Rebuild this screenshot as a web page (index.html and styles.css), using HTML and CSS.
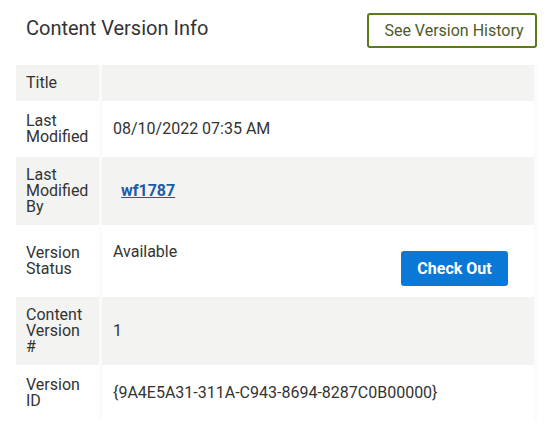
FILE: index.html
```html
<!DOCTYPE html>
<html>
<head>
<meta charset="utf-8">
<link rel="stylesheet" href="styles.css">
</head>
<body>
<div class="panel">
  <div class="header">
    <h2 class="title">Content Version Info</h2>
    <button class="btn-outline">See Version History</button>
  </div>
  <div class="grid">
    <div class="cell label shade r-title">Title</div>
    <div class="cell value shade r-title"></div>

    <div class="cell label r-mod">Last<br>Modified</div>
    <div class="cell value r-mod">08/10/2022 07:35 AM</div>

    <div class="cell label shade r-by">Last<br>Modified<br>By</div>
    <div class="cell value shade r-by"><a class="user" href="#">wf1787</a></div>

    <div class="cell label r-status">Version<br>Status</div>
    <div class="cell value r-status status-cell">
      <div class="status-wrap">
        <span class="status-text">Available</span>
        <button class="btn-primary">Check Out</button>
      </div>
    </div>

    <div class="cell label shade r-num">Content<br>Version<br>#</div>
    <div class="cell value shade r-num">1</div>

    <div class="cell label r-id">Version<br>ID</div>
    <div class="cell value r-id">{9A4E5A31-311A-C943-8694-8287C0B00000}</div>
  </div>
</div>
</body>
</html>
```

FILE: styles.css
```css
* { box-sizing: border-box; }
html, body {
  margin: 0;
  padding: 0;
  background: #ffffff;
}
body {
  font-family: Roboto, "Liberation Sans", Arial, sans-serif;
  color: #333333;
  font-size: 16px;
}
.panel {
  width: 548px;
  padding: 13px 11px 0 16px;
}
.header {
  display: flex;
  justify-content: space-between;
  align-items: flex-start;
  height: 52px;
}
.title {
  margin: 0;
  padding: 3px 0 0 10px;
  font-size: 20px;
  font-weight: 400;
  line-height: 24px;
  color: #333333;
}
.btn-outline {
  height: 35px;
  width: 170px;
  padding: 0 0 0 4px;
  background: #ffffff;
  border: 2px solid #5b7a1d;
  border-radius: 3px;
  font-family: Roboto, "Liberation Sans", Arial, sans-serif;
  font-size: 16px;
  color: #4e5a2a;
  cursor: pointer;
}
.grid {
  display: grid;
  grid-template-columns: 83px 432px;
  column-gap: 3px;
  width: 521px;
  padding-right: 3px;
  background: #fbfbfb;
}
.cell {
  display: flex;
  align-items: center;
  background: #ffffff;
  line-height: 16px;
}
.cell.shade { background: #f3f3f2; }
.label { padding: 0 4px 0 10px; }
.value { padding: 0 10px 0 11px; }
.r-title { height: 36px; }
.r-mod { height: 56px; }
.r-by { height: 68px; }
.r-status { height: 72px; }
.r-num { height: 68px; }
.r-id { height: 56px; }
.user {
  margin-left: 8px;
  font-weight: 700;
  color: #1c5ca7;
  text-decoration: underline;
}
.status-cell {
  align-items: flex-start;
  padding-top: 18px;
}
.status-wrap {
  display: flex;
  justify-content: space-between;
  align-items: flex-start;
  width: 100%;
}
.status-text {
  line-height: 18px;
}
.btn-primary {
  margin-top: 8px;
  margin-right: 16px;
  width: 107px;
  height: 35px;
  padding: 0;
  background: #0a78d6;
  border: none;
  border-radius: 3px;
  color: #ffffff;
  font-family: Roboto, "Liberation Sans", Arial, sans-serif;
  font-size: 16px;
  font-weight: 700;
  cursor: pointer;
}
```
